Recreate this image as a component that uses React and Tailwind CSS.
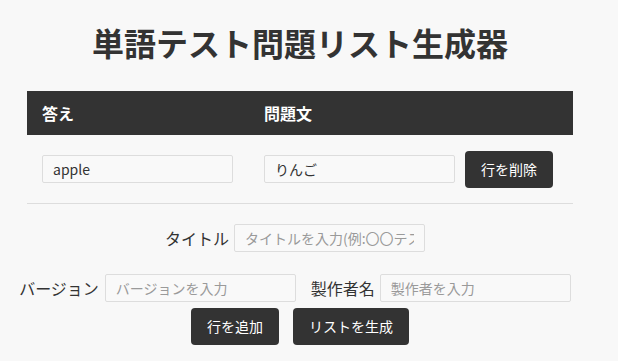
import React from 'react';

const font = "font-['Noto_Sans_CJK_JP','Noto_Sans',sans-serif]";

const inputCls =
    'h-[28px] w-[191px] border border-[#dddddd] bg-[#f9f9f9] px-[10px] text-[14px] text-[#333333] placeholder:text-[#9a9a9a] outline-none rounded-[2px]';

const btnCls =
    'h-[37px] px-4 bg-[#333333] text-white text-[14px] leading-[17px] rounded-[4px]';

const App = () => {
    return (
        <div className={`${font} w-full min-h-[361px] bg-[#f8f8f8] text-[#333333]`}>
            <div className="w-[600px]">
                <h1 className="pt-[26px] text-center text-[32px] leading-[32px] font-bold">
                    単語テスト問題リスト生成器
                </h1>

                <div className="mx-[27px] mt-[33px]">
                    <div className="flex items-center h-[44px] bg-[#333333] text-white text-[16px] font-bold">
                        <div className="w-[222px] pl-[15px]">答え</div>
                        <div className="pl-[15px]">問題文</div>
                    </div>
                    <div className="flex items-center h-[69px] border-b border-[#dddddd]">
                        <div className="w-[222px] pl-[15px]">
                            <input className={inputCls} defaultValue="apple" />
                        </div>
                        <div className="w-[206px] pl-[15px]">
                            <input className={inputCls} defaultValue="りんご" />
                        </div>
                        <div className="pl-[10px]">
                            <button className={btnCls}>行を削除</button>
                        </div>
                    </div>
                </div>

                <div className="flex items-center justify-center mt-[20px] text-[16px]">
                    <label className="mr-[5px]">タイトル</label>
                    <input className={`${inputCls} h-[27px] w-[190px] mr-[10px]`} placeholder="タイトルを入力(例:〇〇テスト)" />
                </div>

                <div className="flex items-center justify-center mt-[22px] text-[16px]">
                    <label className="mr-[6px]">バージョン</label>
                    <input className={`${inputCls} h-[26px] mr-[15px]`} placeholder="バージョンを入力" />
                    <label className="mr-[5px]">製作者名</label>
                    <input className={`${inputCls} h-[26px] mr-[10px]`} placeholder="製作者を入力" />
                </div>

                <div className="flex justify-center gap-[14px] mt-[6px]">
                    <button className={btnCls}>行を追加</button>
                    <button className={btnCls}>リストを生成</button>
                </div>
            </div>
        </div>
    );
};

export default App;
